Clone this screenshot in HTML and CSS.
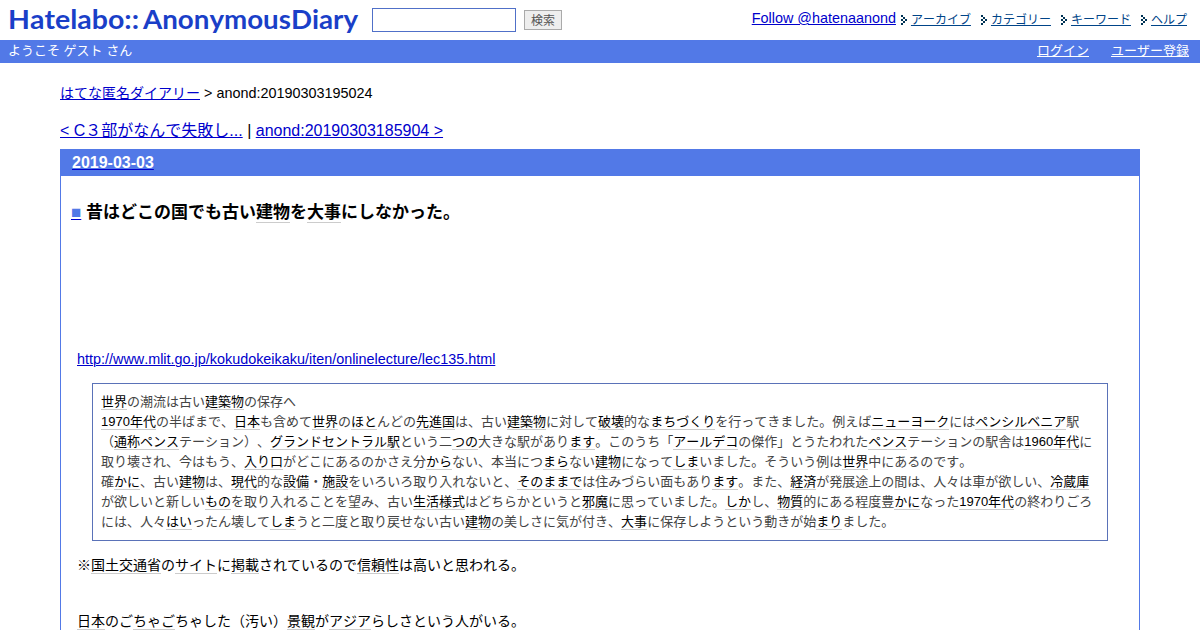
FILE: index.html
```html
<!DOCTYPE html>
<html lang="ja">
<head>
    <meta charset="UTF-8">
    <title>昔はどこの国でも古い建物を大事にしなかった。</title>
    <link rel="stylesheet" href="styles.css">
</head>
<body>

    <!-- Header -->
    <div class="header">
        <a href="#" class="logo">
            <svg width="364" height="40" viewBox="0 0 364 40">
                <text x="8" y="29" textLength="131" lengthAdjust="spacingAndGlyphs">Hatelabo::</text>
                <text x="143" y="29" textLength="215" lengthAdjust="spacingAndGlyphs">AnonymousDiary</text>
            </svg>
        </a>
        <form class="search">
            <input type="text" class="search-word">
            <button type="button" class="search-button">検索</button>
        </form>
        <div class="navi">
            <a href="#" class="follow">Follow @hatenaanond</a>
            <ul class="menu">
                <li><svg class="arrow" width="6" height="10"><path d="M0 0h2v2h-2zM2 2h2v2h-2zM4 4h2v2h-2zM0 4h2v2h-2zM2 6h2v2h-2zM0 8h2v2h-2z"/></svg><a href="#">アーカイブ</a></li>
                <li><svg class="arrow" width="6" height="10"><path d="M0 0h2v2h-2zM2 2h2v2h-2zM4 4h2v2h-2zM0 4h2v2h-2zM2 6h2v2h-2zM0 8h2v2h-2z"/></svg><a href="#">カテゴリー</a></li>
                <li><svg class="arrow" width="6" height="10"><path d="M0 0h2v2h-2zM2 2h2v2h-2zM4 4h2v2h-2zM0 4h2v2h-2zM2 6h2v2h-2zM0 8h2v2h-2z"/></svg><a href="#">キーワード</a></li>
                <li><svg class="arrow" width="6" height="10"><path d="M0 0h2v2h-2zM2 2h2v2h-2zM4 4h2v2h-2zM0 4h2v2h-2zM2 6h2v2h-2zM0 8h2v2h-2z"/></svg><a href="#">ヘルプ</a></li>
            </ul>
        </div>
    </div>

    <div class="guide">
        <span>ようこそ ゲスト さん</span>
        <div class="guide-links">
            <a href="#">ログイン</a>
            <a href="#">ユーザー登録</a>
        </div>
    </div>

    <div class="content">
        <div class="bread"><a href="#">はてな匿名ダイアリー</a> &gt; anond:20190303195024</div>
        <div class="pager"><a href="#">&lt; C３部がなんで失敗し...</a> | <a href="#">anond:20190303185904 &gt;</a></div>

        <!-- Entry -->
        <div class="day">
            <h2><a href="#">2019-03-03</a></h2>
            <div class="section">
                <h3><a href="#" class="sanchor">■</a> 昔はどこの国でも古い<a class="keyword">建物</a>を<a class="keyword">大事</a>にしなかった。</h3>
                <div class="ad"></div>
                <p class="url"><a href="#">http://www.mlit.go.jp/kokudokeikaku/iten/onlinelecture/lec135.html</a></p>
                <blockquote>
                    <a class="keyword">世界</a>の潮流は古い<a class="keyword">建築物</a>の保存へ<br>
                    <a class="keyword">1970年代</a>の半ばまで、<a class="keyword">日本</a>も含めて<a class="keyword">世界</a>の<a class="keyword">ほと</a>んどの<a class="keyword">先進国</a>は、古い<a class="keyword">建築物</a>に対して<a class="keyword">破壊</a>的な<a class="keyword">まちづくり</a>を行ってきました。例えば<a class="keyword">ニューヨーク</a>には<a class="keyword">ペンシルベニア</a>駅（<a class="keyword">通称</a><a class="keyword">ペンス</a>テーション）、<a class="keyword">グランドセントラル駅</a>という二<a class="keyword">つの</a>大きな駅があり<a class="keyword">ます</a>。このうち「<a class="keyword">アールデコ</a>の傑作」とうたわれた<a class="keyword">ペンス</a>テーションの駅舎は<a class="keyword">1960年代</a>に取り壊され、今はもう、<a class="keyword">入り口</a>がどこにあるのかさえ分<a class="keyword">から</a>ない、本当につ<a class="keyword">まら</a>ない<a class="keyword">建物</a>になって<a class="keyword">しま</a>いました。そういう例は<a class="keyword">世界</a>中にあるのです。<br>
                    確<a class="keyword">かに</a>、古い<a class="keyword">建物</a>は、<a class="keyword">現代</a>的な<a class="keyword">設備</a>・<a class="keyword">施設</a>をいろいろ取り入れないと、<a class="keyword">そのままで</a>は住みづらい面もあり<a class="keyword">ます</a>。また、<a class="keyword">経済</a>が発展途上の間は、人々は車が欲しい、<a class="keyword">冷蔵庫</a>が欲しいと新しい<a class="keyword">もの</a>を取り入れることを望み、古い<a class="keyword">生活様式</a>はどちらかというと<a class="keyword">邪魔</a>に思っていました。<a class="keyword">しか</a>し、<a class="keyword">物質</a>的にある程度豊<a class="keyword">かに</a>なった<a class="keyword">1970年代</a>の終わりごろには、人々<a class="keyword">はい</a>ったん壊して<a class="keyword">しま</a>うと二度と取り戻せない古い<a class="keyword">建物</a>の美しさに気が付き、<a class="keyword">大事</a>に保存しようという動きが始<a class="keyword">まり</a>ました。
                </blockquote>
                <p>※<a class="keyword">国土交通省</a>の<a class="keyword">サイト</a>に<a class="keyword">掲載</a>されているので<a class="keyword">信頼性</a>は高いと思われる。</p>
                <p class="next"><a class="keyword">日本</a>のご<a class="keyword">ちゃご</a>ちゃした（汚い）<a class="keyword">景観</a>が<a class="keyword">アジア</a>らしさという人がいる。</p>
            </div>
        </div>
    </div>

</body>
</html>
```
FILE: styles.css
```css
/* General */
body {
    margin: 0;
    padding: 0;
    height: 630px;
    overflow: hidden;
    background-color: white;
    color: black;
    font-family: "Liberation Sans", "Noto Sans CJK JP", sans-serif;
    font-size: 14.4px;
    font-kerning: none;
    text-spacing-trim: space-all;
}

a {
    color: #0000cc;
    text-decoration-thickness: 1px;
    text-underline-offset: 1px;
}

/* Header */
.header {
    display: flex;
    height: 40px;
}

.logo svg {
    display: block;
}

.logo text {
    font-family: Lato, sans-serif;
    font-size: 26.5px;
    font-weight: bold;
    fill: #1a3fc8;
}

.search {
    display: flex;
    align-items: center;
    gap: 8px;
    margin-left: 8px;
}

.search-word {
    box-sizing: border-box;
    width: 144px;
    height: 24px;
    border: 1px solid #5070c8;
}

.search-button {
    box-sizing: border-box;
    width: 38px;
    height: 20px;
    padding: 0;
    border: 1px solid #aaa;
    background-color: #eee;
    color: #555;
    font-family: "Noto Sans CJK JP", sans-serif;
    font-size: 12px;
    line-height: 16px;
}

.navi {
    display: flex;
    margin-left: auto;
    padding-right: 13px;
}

.follow {
    margin-top: 8px;
    line-height: 20px;
}

.menu {
    display: flex;
    align-items: flex-start;
    gap: 9px;
    margin: 10px 0 0 5px;
    padding: 0;
    list-style: none;
    font-size: 12px;
    line-height: 20px;
}

.menu li {
    display: flex;
    align-items: center;
    gap: 4px;
}

.menu li + li {
    margin-left: 1px;
}

.menu a {
    color: #004488;
}

.arrow {
    fill: #003355;
}

/* Guide bar */
.guide {
    display: flex;
    justify-content: space-between;
    height: 23px;
    padding: 0 11px 0 8px;
    background-color: #5279e7;
    color: white;
    font-size: 13px;
    line-height: 22px;
}

.guide-links {
    display: flex;
    gap: 22px;
}

.guide a {
    color: white;
}

/* Content */
.content {
    margin: 20px 60px 0;
}

.bread {
    line-height: 20px;
}

.bread a {
    font-size: 14px;
}

.pager {
    margin-top: 18px;
    font-size: 16px;
    line-height: 20px;
}

/* Entry */
.day {
    margin-top: 8px;
    border: 1px solid #5279e7;
    border-top: none;
}

.day h2 {
    margin: 0;
    padding-left: 11px;
    background-color: #5279e7;
    font-size: 16px;
    line-height: 27px;
}

.day h2 a {
    color: white;
    text-decoration-color: #0000cc;
}

.section {
    padding: 25px 31px 20px 10px;
}

.section h3 {
    margin: 0;
    font-size: 17px;
    line-height: 24px;
}

.section h3 .sanchor {
    color: #5279e7;
    text-decoration-color: #0000cc;
}

.keyword {
    border-bottom: 1px solid #ccc;
    color: black;
    text-decoration: none;
}

.ad {
    height: 124px;
}

.section p {
    margin: 0 0 0 6px;
    font-size: 14px;
    line-height: 20px;
}

.section .url {
    font-size: 14.4px;
}

.section .next {
    margin-top: 36px;
}

blockquote {
    margin: 14px 0 14px 21px;
    padding: 8px;
    border: 1px solid #5a72b8;
    color: #444;
    font-size: 13px;
    line-height: 20px;
}
```
